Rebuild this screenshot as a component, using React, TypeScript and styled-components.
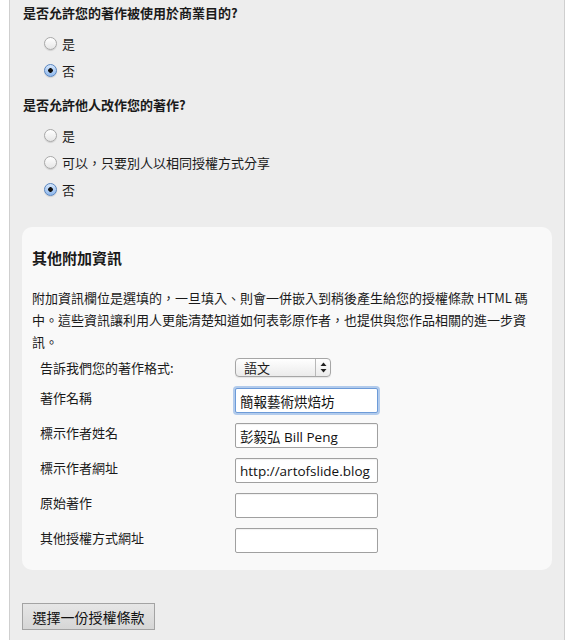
import React from "react";
import styled, { createGlobalStyle } from "styled-components";

const Global = createGlobalStyle`
  html, body { margin: 0; padding: 0; background: #ffffff; }
  body { font-family: "Noto Sans CJK TC", "Noto Sans", sans-serif; color: #1a1a1a; }
`;

const Panel = styled.div`
  margin-left: 9px;
  width: 556px;
  min-height: 640px;
  box-sizing: border-box;
  background: #ededed;
  border-left: 1px solid #cfcfcf;
  border-right: 1px solid #cfcfcf;
  padding: 3px 12px 0 12px;
`;

const Question = styled.div`
  font-size: 13px;
  line-height: 20px;
  font-weight: 700;
  padding-left: 1px;
`;

const RadioGroup = styled.div`
  margin: 7px 0 11px;
  display: flex;
  flex-direction: column;
`;

const RadioRow = styled.label`
  display: flex;
  align-items: center;
  height: 27px;
  padding-left: 22px;
  font-size: 13px;
  gap: 5px;
`;

const RadioDot = styled.span<{ $checked?: boolean }>`
  width: 13px;
  height: 13px;
  border-radius: 50%;
  box-sizing: border-box;
  border: 1px solid ${(p) => (p.$checked ? "#5a86c0" : "#a8a8a8")};
  background: ${(p) =>
    p.$checked
      ? "radial-gradient(circle at 50% 50%, #111 0 2px, transparent 2.6px), linear-gradient(#d5e6fb, #8fb8ec)"
      : "linear-gradient(#ffffff, #e6e6e6)"};
  box-shadow: 0 1px 1px rgba(0,0,0,0.12);
  flex: none;
`;

const Card = styled.section`
  margin-top: 24px;
  background: #f9f9f9;
  border-radius: 10px;
  padding: 21px 10px 17px;
`;

const CardTitle = styled.h3`
  margin: 0;
  font-size: 15px;
  line-height: 20px;
  font-weight: 700;
`;

const Para = styled.p`
  margin: 19px 0 0;
  font-size: 13px;
  line-height: 22px;
`;

const FormGrid = styled.div`
  margin-top: 5px;
  display: grid;
  grid-template-columns: 195px auto;
  row-gap: 10px;
  padding-left: 8px;
`;

const FieldLabel = styled.div<{ $center?: boolean }>`
  font-size: 13px;
  line-height: 20px;
  align-self: ${(p) => (p.$center ? "center" : "start")};
`;

const SelectBox = styled.div`
  width: 96px;
  height: 19px;
  box-sizing: border-box;
  border: 1px solid #a6a6a6;
  border-radius: 4px;
  background: linear-gradient(#ffffff, #ebebeb);
  display: flex;
  align-items: stretch;
  font-size: 13px;
  box-shadow: 0 1px 1px rgba(0,0,0,0.08);
`;

const SelectText = styled.span`
  flex: 1;
  padding-left: 8px;
  line-height: 17px;
`;

const SelectArrows = styled.span`
  width: 14px;
  border-left: 1px solid #b8b8b8;
  display: flex;
  align-items: center;
  justify-content: center;
`;

const TextInput = styled.input<{ $focused?: boolean }>`
  width: 143px;
  height: 25px;
  box-sizing: border-box;
  border: 1px solid ${(p) => (p.$focused ? "#6d9bd8" : "#a0a0a0")};
  border-radius: 2px;
  background: #ffffff;
  padding: 0 4px;
  font-family: "Open Sans", "Noto Sans CJK TC", sans-serif;
  font-size: 13.5px;
  color: #111;
  outline: none;
  box-shadow: ${(p) => (p.$focused ? "0 0 0 2px rgba(120,165,225,0.55)" : "inset 0 1px 1px rgba(0,0,0,0.06)")};
`;

const SubmitButton = styled.button`
  margin-top: 33px;
  width: 133px;
  height: 27px;
  border: 1px solid #a3a3a3;
  background: linear-gradient(#e6e6e6, #d6d6d6);
  font-family: "Noto Sans CJK TC", sans-serif;
  font-size: 14px;
  color: #111;
  padding: 0;
`;

const radio = (label: string, checked?: boolean) => (
  <RadioRow key={label}>
    <RadioDot $checked={checked} />
    <span>{label}</span>
  </RadioRow>
);

export default function App() {
  return (
    <>
      <Global />
      <Panel>
        <Question>是否允許您的著作被使用於商業目的?</Question>
        <RadioGroup>
          {radio("是")}
          {radio("否", true)}
        </RadioGroup>
        <Question>是否允許他人改作您的著作?</Question>
        <RadioGroup>
          {radio("是")}
          {radio("可以，只要別人以相同授權方式分享")}
          {radio("否", true)}
        </RadioGroup>
        <Card>
          <CardTitle>其他附加資訊</CardTitle>
          <Para>
            附加資訊欄位是選填的，一旦填入、則會一併嵌入到稍後產生給您的授權條款 HTML 碼中。這些資訊讓利用人更能清楚知道如何表彰原作者，也提供與您作品相關的進一步資訊。
          </Para>
          <FormGrid>
            <FieldLabel $center>告訴我們您的著作格式:</FieldLabel>
            <SelectBox>
              <SelectText>語文</SelectText>
              <SelectArrows>
                <svg width="7" height="11" viewBox="0 0 7 11">
                  <path d="M3.5 0.5 L6.5 4 H0.5 Z" fill="#222" />
                  <path d="M3.5 10.5 L6.5 7 H0.5 Z" fill="#222" />
                </svg>
              </SelectArrows>
            </SelectBox>
            <FieldLabel>著作名稱</FieldLabel>
            <TextInput $focused defaultValue="簡報藝術烘焙坊" />
            <FieldLabel>標示作者姓名</FieldLabel>
            <TextInput defaultValue="彭毅弘 Bill Peng" />
            <FieldLabel>標示作者網址</FieldLabel>
            <TextInput defaultValue="http://artofslide.blog" />
            <FieldLabel>原始著作</FieldLabel>
            <TextInput defaultValue="" />
            <FieldLabel>其他授權方式網址</FieldLabel>
            <TextInput defaultValue="" />
          </FormGrid>
        </Card>
        <SubmitButton>選擇一份授權條款</SubmitButton>
      </Panel>
    </>
  );
}
